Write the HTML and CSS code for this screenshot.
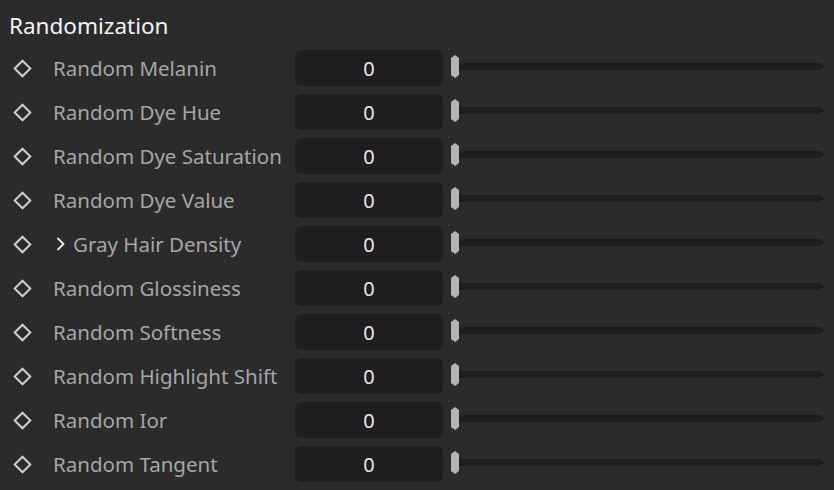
FILE: index.html
```html
<!DOCTYPE html>
<html lang="en">
<head>
    <meta charset="UTF-8">
    <title>Randomization</title>
    <link rel="stylesheet" href="styles.css">
</head>
<body>
    <div class="panel">
        <h2 class="panel-title">Randomization</h2>

        <div class="param">
            <span class="key"><span class="diamond"></span></span>
            <span class="label">Random Melanin</span>
            <div class="value">0</div>
            <div class="slider"><span class="track"></span><span class="handle"></span></div>
        </div>
        <div class="param">
            <span class="key"><span class="diamond"></span></span>
            <span class="label">Random Dye Hue</span>
            <div class="value">0</div>
            <div class="slider"><span class="track"></span><span class="handle"></span></div>
        </div>
        <div class="param">
            <span class="key"><span class="diamond"></span></span>
            <span class="label">Random Dye Saturation</span>
            <div class="value">0</div>
            <div class="slider"><span class="track"></span><span class="handle"></span></div>
        </div>
        <div class="param">
            <span class="key"><span class="diamond"></span></span>
            <span class="label">Random Dye Value</span>
            <div class="value">0</div>
            <div class="slider"><span class="track"></span><span class="handle"></span></div>
        </div>
        <div class="param">
            <span class="key"><span class="diamond"></span></span>
            <span class="label">
                <svg class="chevron" width="9" height="16" viewBox="0 0 9 16"><path d="M1.5 2 L7.5 8 L1.5 14" fill="none" stroke="#ececec" stroke-width="1.8"/></svg>
                Gray Hair Density
            </span>
            <div class="value">0</div>
            <div class="slider"><span class="track"></span><span class="handle"></span></div>
        </div>
        <div class="param">
            <span class="key"><span class="diamond"></span></span>
            <span class="label">Random Glossiness</span>
            <div class="value">0</div>
            <div class="slider"><span class="track"></span><span class="handle"></span></div>
        </div>
        <div class="param">
            <span class="key"><span class="diamond"></span></span>
            <span class="label">Random Softness</span>
            <div class="value">0</div>
            <div class="slider"><span class="track"></span><span class="handle"></span></div>
        </div>
        <div class="param">
            <span class="key"><span class="diamond"></span></span>
            <span class="label">Random Highlight Shift</span>
            <div class="value">0</div>
            <div class="slider"><span class="track"></span><span class="handle"></span></div>
        </div>
        <div class="param">
            <span class="key"><span class="diamond"></span></span>
            <span class="label">Random Ior</span>
            <div class="value">0</div>
            <div class="slider"><span class="track"></span><span class="handle"></span></div>
        </div>
        <div class="param">
            <span class="key"><span class="diamond"></span></span>
            <span class="label">Random Tangent</span>
            <div class="value">0</div>
            <div class="slider"><span class="track"></span><span class="handle"></span></div>
        </div>
    </div>
</body>
</html>
```

FILE: styles.css
```css
* {
    margin: 0;
    padding: 0;
    box-sizing: border-box;
}

body {
    background: #2b2b2b;
    font-family: "Noto Sans", "Open Sans", sans-serif;
    width: 834px;
    height: 490px;
    overflow: hidden;
}

.panel {
    padding-top: 9px;
}

.panel-title {
    font-weight: 400;
    font-size: 22.5px;
    line-height: 34px;
    color: #f4f4f4;
    padding-left: 9px;
    margin-bottom: 3px;
}

.param {
    display: flex;
    align-items: center;
    height: 44px;
}

.key {
    width: 31px;
    height: 31px;
    margin-left: 7px;
    border-radius: 50%;
    border: 1px solid #2f2f2f;
    display: flex;
    align-items: center;
    justify-content: center;
}

.diamond {
    width: 13px;
    height: 13px;
    border: 2px solid #d0d0d0;
    transform: rotate(45deg);
}

.label {
    width: 257px;
    padding-left: 15px;
    font-size: 20.5px;
    color: #a6a6a6;
    white-space: nowrap;
    display: flex;
    align-items: center;
}

.chevron {
    margin: 0 8px 0 3px;
}

.value {
    width: 148px;
    height: 36px;
    background: #1e1e1e;
    border-radius: 6px;
    color: #e8e8e8;
    font-size: 20px;
    display: flex;
    align-items: center;
    justify-content: center;
}

.slider {
    position: relative;
    flex: 1;
    height: 23px;
    margin: 0 10px 3px 8px;
    display: flex;
    align-items: center;
}

.track {
    flex: 1;
    height: 7px;
    background: #1e1e1e;
    clip-path: polygon(0 0, calc(100% - 4px) 0, 100% 50%, calc(100% - 4px) 100%, 0 100%);
}

.handle {
    position: absolute;
    left: 0;
    top: 0;
    width: 8px;
    height: 23px;
    background: #b4b4b4;
    clip-path: polygon(50% 0, 100% 3px, 100% calc(100% - 3px), 50% 100%, 0 calc(100% - 3px), 0 3px);
}
```
